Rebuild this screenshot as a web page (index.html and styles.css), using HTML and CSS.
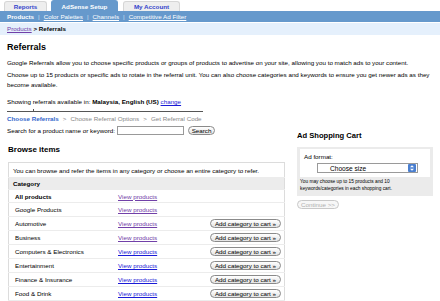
FILE: index.html
```html
<!DOCTYPE html>
<html lang="en">
<head>
  <meta charset="UTF-8" />
  <title>AdSense Setup - Referrals</title>
  <link rel="stylesheet" href="styles.css">
</head>
<body>

  <div class="tabs">
    <a class="tab tab-reports" href="#">Reports</a>
    <a class="tab tab-setup active" href="#">AdSense Setup</a>
    <a class="tab tab-account" href="#">My Account</a>
  </div>

  <div class="subnav">
    <b>Products</b><span class="sep">|</span><a href="#">Color Palettes</a><span class="sep">|</span><a href="#">Channels</a><span class="sep">|</span><a href="#">Competitive Ad Filter</a>
  </div>

  <div class="crumbs">
    <a href="#" class="visited">Products</a> <b>&gt; Referrals</b>
  </div>

  <div class="page">
    <h1>Referrals</h1>
    <p class="intro">Google Referrals allow you to choose specific products or groups of products to advertise on your site, allowing you to match ads to your content.</p>
    <p class="intro">Choose up to 15 products or specific ads to rotate in the referral unit. You can also choose categories and keywords to ensure you get newer ads as they become available.</p>
    <p class="market">Showing referrals available in: <b>Malaysia, English (US)</b> <a href="#">change</a></p>

    <div class="layout">
      <div class="main">
        <div class="steps">
          <b class="current">Choose Referrals</b><span class="arrow">&gt;</span>Choose Referral Options<span class="arrow">&gt;</span>Get Referral Code
        </div>

        <div class="search">
          <label for="q">Search for a product name or keyword:</label>
          <input type="text" id="q">
          <button class="pill">Search</button>
        </div>

        <h2 class="browse">Browse items</h2>

        <table class="cats">
          <tr class="hint"><td colspan="3">You can browse and refer the items in any category or choose an entire category to refer.</td></tr>
          <tr class="head"><td colspan="3">Category</td></tr>
          <tr class="all"><td class="name"><b>All products</b></td><td class="view"><a href="#" class="visited">View products</a></td><td class="add"></td></tr>
          <tr><td class="name">Google Products</td><td class="view"><a href="#" class="visited">View products</a></td><td class="add"></td></tr>
          <tr><td class="name">Automotive</td><td class="view"><a href="#" class="visited">View products</a></td><td class="add"><button class="pill">Add category to cart &raquo;</button></td></tr>
          <tr><td class="name">Business</td><td class="view"><a href="#" class="visited">View products</a></td><td class="add"><button class="pill">Add category to cart &raquo;</button></td></tr>
          <tr><td class="name">Computers &amp; Electronics</td><td class="view"><a href="#">View products</a></td><td class="add"><button class="pill">Add category to cart &raquo;</button></td></tr>
          <tr><td class="name">Entertainment</td><td class="view"><a href="#">View products</a></td><td class="add"><button class="pill">Add category to cart &raquo;</button></td></tr>
          <tr><td class="name">Finance &amp; Insurance</td><td class="view"><a href="#">View products</a></td><td class="add"><button class="pill">Add category to cart &raquo;</button></td></tr>
          <tr><td class="name">Food &amp; Drink</td><td class="view"><a href="#">View products</a></td><td class="add"><button class="pill">Add category to cart &raquo;</button></td></tr>
        </table>
      </div>

      <div class="cart">
        <h2>Ad Shopping Cart</h2>
        <div class="cart-box">
          <div class="cart-inner">
            <div class="label">Ad format:</div>
            <div class="select">
              <span>Choose size</span>
              <svg class="spin" width="8" height="8" viewBox="0 0 8 8">
                <rect x="0" y="0" width="8" height="8" rx="1" fill="#4a7fd0"/>
                <path d="M2 3.2 L4 1.2 L6 3.2 Z M2 4.8 L4 6.8 L6 4.8 Z" fill="#fff"/>
              </svg>
            </div>
          </div>
          <p class="note">You may choose up to 15 products and 10<br>keywords/categories in each shopping cart.</p>
        </div>
        <button class="pill continue" disabled>Continue &gt;&gt;</button>
      </div>
    </div>
  </div>

</body>
</html>
```

FILE: styles.css
```css
body {
  margin: 0;
  font-family: "Liberation Sans", Arial, sans-serif;
  font-size: 6.25px;
  color: #000;
  background: #fff;
}

a {
  color: #1a1ad6;
}

a.visited {
  color: #7140a8;
}

/* top tabs */
.tabs {
  display: flex;
  padding: 1px 0 0 4px;
  height: 10px;
}

.tab {
  box-sizing: border-box;
  height: 10px;
  line-height: 10px;
  text-align: center;
  font-weight: bold;
  color: #3344cc;
  text-decoration: none;
  background: #eeeeee;
  border: 1px solid #d6d6d6;
  border-bottom: none;
  border-radius: 3px 3px 0 0;
}

.tab-reports { width: 43px; }
.tab-setup { width: 67px; margin-left: 4px; }
.tab-account { width: 57px; margin-left: 5px; }

.tab.active {
  background: #6699cc;
  border-color: #6699cc;
  color: #fff;
  height: 11px;
  margin-top: -1px;
  line-height: 12px;
}

.subnav {
  background: #6699cc;
  height: 11px;
  line-height: 11px;
  padding-left: 7px;
  color: #fff;
}

.subnav a {
  color: #fff;
}

.subnav .sep {
  color: #cfe0f2;
  margin: 0 4px;
}

.crumbs {
  background: #e5f0fc;
  height: 12px;
  line-height: 12px;
  margin-top: 1px;
  padding-left: 7px;
}

/* page body */
.page {
  padding: 0 7px;
}

h1 {
  font-size: 9px;
  line-height: 12px;
  margin: 6px 0 0;
}

.intro {
  line-height: 10px;
  margin: 5px 0 0;
}

.intro + .intro {
  margin-top: 2px;
}

.market {
  line-height: 10px;
  margin: 7px 0 0;
}

.layout {
  display: flex;
  align-items: flex-start;
}

.main {
  width: 279px;
}

.steps {
  position: relative;
  width: 196px;
  border-top: 1px solid #555;
  margin-top: 4px;
  padding-top: 2px;
  line-height: 10px;
  color: #888;
}

.steps::before {
  content: "";
  position: absolute;
  left: 26px;
  top: -3px;
  width: 1px;
  height: 2px;
  background: #555;
}

.steps .current {
  color: #3366cc;
}

.steps .arrow {
  margin: 0 4px;
}

.search {
  display: flex;
  align-items: center;
  height: 11px;
  margin-top: 1px;
}

.search input {
  box-sizing: border-box;
  width: 67px;
  height: 9px;
  margin: 0 0 0 2px;
  padding: 0;
  border: 1px solid #999;
  font-size: 6px;
}

.search .pill {
  margin-left: 4px;
  width: 27px;
}

.pill {
  box-sizing: border-box;
  height: 9px;
  padding: 0 2px;
  font-family: inherit;
  font-size: 6.25px;
  line-height: 7px;
  color: #000;
  background: linear-gradient(#fff, #e4e4e4);
  border: 1px solid #8a8a8a;
  border-radius: 5px;
  cursor: pointer;
  white-space: nowrap;
}

h2 {
  font-size: 8px;
  line-height: 10px;
  margin: 0;
}

.browse {
  margin: 9px 0 0 1px;
}

.cats {
  width: 277px;
  margin: 7px 0 0 1px;
  border: 1px solid #dcdcdc;
  border-collapse: collapse;
}

.cats td {
  height: 13px;
  padding: 0 0 0 6px;
  border-bottom: 1px solid #ececec;
  vertical-align: middle;
}

.cats .hint td {
  height: 14px;
  padding-left: 4px;
}

.cats .head td {
  height: 11px;
  background: #ececec;
  font-weight: bold;
  padding-left: 4px;
}

.cats .all td {
  height: 12px;
}

.cats .name {
  width: 97px;
}

.cats .add {
  text-align: right;
  padding-right: 3px;
}

.cats .add .pill {
  width: 71px;
  vertical-align: middle;
}

/* shopping cart */
.cart {
  width: 136px;
  margin: 24px 0 0 11px;
}

.cart h2 {
  font-size: 7.6px;
}

.cart-box {
  margin-top: 6px;
  background: #ebebeb;
  padding: 2px 3px 4px;
}

.cart-inner {
  background: #fff;
  padding: 4px 4px 4px;
}

.cart-inner .label {
  line-height: 8px;
}

.select {
  box-sizing: border-box;
  display: flex;
  align-items: center;
  justify-content: space-between;
  width: 101px;
  height: 10px;
  margin: 2px 0 0 13px;
  padding: 0 1px 0 12px;
  border: 1px solid #9a9a9a;
  font-size: 6.6px;
}

.note {
  margin: 2px 0 0;
  font-size: 4.8px;
  line-height: 6.5px;
}

.continue {
  margin-top: 4px;
  width: 42px;
  color: #b0b0b0;
  border-color: #c8c8c8;
  background: #f7f7f7;
  cursor: default;
}
```
